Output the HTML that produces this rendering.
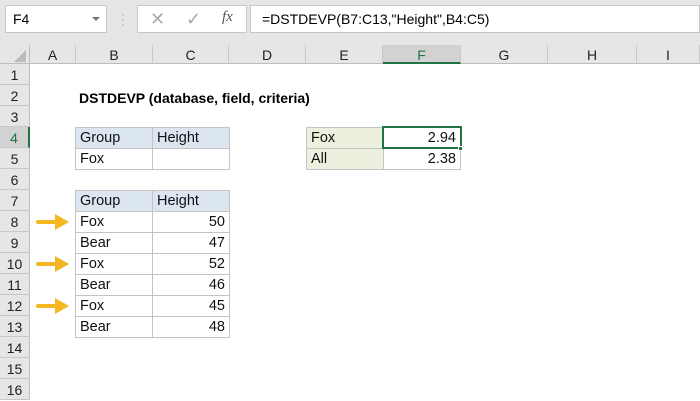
<!DOCTYPE html>
<html><head><style>
*{margin:0;padding:0;box-sizing:border-box}
body{width:700px;height:400px;overflow:hidden;background:#fff;font-family:"Liberation Sans",Calibri,sans-serif;position:relative}
.a{position:absolute}
.rh{position:absolute;left:0;width:30px;height:21px;background:#e6e6e6;border-bottom:1px solid #c8c8c8;border-right:1px solid #bdbdbd;font-size:14px;text-align:center;line-height:22px;color:#222}
.ch{position:absolute;top:45px;height:19px;background:#e6e6e6;border-right:1px solid #c8c8c8;font-size:14px;text-align:center;line-height:20px;color:#222;border-bottom:1px solid #bdbdbd}
.c{position:absolute;height:22px;border:1px solid #c4c4c4;font-size:14.5px;line-height:21px;padding:0 4px;color:#111}
.r{text-align:right}
.hd{background:#dce6f1}
.gr{background:#ebf1de}
</style></head><body>
<div class="a" style="left:0;top:0;width:700px;height:45px;background:#e6e6e6"></div>
<div class="a" style="left:5px;top:5px;width:102px;height:28px;background:#fff;border:1px solid #c6c6c6;font-size:14px;line-height:26px;padding-left:7px">F4</div>
<div class="a" style="left:92px;top:17px;width:0;height:0;border-left:4px solid transparent;border-right:4px solid transparent;border-top:4px solid #777"></div>
<div class="a" style="left:121px;top:12px;color:#aaa;font-size:12px;line-height:5px">·<br>·<br>·</div>
<div class="a" style="left:137px;top:5px;width:110px;height:28px;background:#fff;border:1px solid #c6c6c6"></div>
<div class="a" style="left:150px;top:9px;color:#aaa;font-size:18px">✕</div>
<div class="a" style="left:186px;top:9px;color:#aaa;font-size:18px">✓</div>
<div class="a" style="left:222px;top:9px;color:#555;font-size:15px;font-style:italic;font-family:'Liberation Serif',serif">fx</div>
<div class="a" style="left:250px;top:5px;width:450px;height:28px;background:#fff;border:1px solid #c6c6c6;font-size:14px;line-height:26px;padding-left:11px">=DSTDEVP(B7:C13,"Height",B4:C5)</div>
<div class="a" style="left:0;top:45px;width:30px;height:19px;background:#e6e6e6;border-right:1px solid #bdbdbd;border-bottom:1px solid #bdbdbd"></div>
<div class="a" style="left:14px;top:50px;width:0;height:0;border-left:12px solid transparent;border-bottom:12px solid #bbb"></div>
<div class="ch" style="left:30px;width:46px">A</div>
<div class="ch" style="left:76px;width:77px">B</div>
<div class="ch" style="left:153px;width:76px">C</div>
<div class="ch" style="left:229px;width:77px">D</div>
<div class="ch" style="left:306px;width:77px">E</div>
<div class="ch" style="left:383px;width:78px;background:#d2d2d2;color:#217346;border-bottom:2px solid #217346">F</div>
<div class="ch" style="left:461px;width:87px">G</div>
<div class="ch" style="left:548px;width:89px">H</div>
<div class="ch" style="left:637px;width:63px">I</div>
<div class="rh" style="top:64px">1</div><div class="rh" style="top:85px">2</div><div class="rh" style="top:106px">3</div>
<div class="rh" style="top:127px;background:#d2d2d2;color:#217346;border-right:2px solid #217346">4</div>
<div class="rh" style="top:148px">5</div><div class="rh" style="top:169px">6</div><div class="rh" style="top:190px">7</div>
<div class="rh" style="top:211px">8</div><div class="rh" style="top:232px">9</div><div class="rh" style="top:253px">10</div>
<div class="rh" style="top:274px">11</div><div class="rh" style="top:295px">12</div><div class="rh" style="top:316px">13</div>
<div class="rh" style="top:337px">14</div><div class="rh" style="top:358px">15</div><div class="rh" style="top:379px">16</div>
<div class="a" style="left:79px;top:90px;font-size:14px;font-weight:bold">DSTDEVP (database, field, criteria)</div>
<div class="c hd" style="left:75px;top:127px;width:78px">Group</div>
<div class="c hd" style="left:152px;top:127px;width:78px">Height</div>
<div class="c" style="left:75px;top:148px;width:78px">Fox</div>
<div class="c" style="left:152px;top:148px;width:78px"></div>
<div class="c hd" style="left:75px;top:190px;width:78px">Group</div>
<div class="c hd" style="left:152px;top:190px;width:78px">Height</div>
<div class="c" style="left:75px;top:211px;width:78px">Fox</div><div class="c r" style="left:152px;top:211px;width:78px">50</div>
<div class="c" style="left:75px;top:232px;width:78px">Bear</div><div class="c r" style="left:152px;top:232px;width:78px">47</div>
<div class="c" style="left:75px;top:253px;width:78px">Fox</div><div class="c r" style="left:152px;top:253px;width:78px">52</div>
<div class="c" style="left:75px;top:274px;width:78px">Bear</div><div class="c r" style="left:152px;top:274px;width:78px">46</div>
<div class="c" style="left:75px;top:295px;width:78px">Fox</div><div class="c r" style="left:152px;top:295px;width:78px">45</div>
<div class="c" style="left:75px;top:316px;width:78px">Bear</div><div class="c r" style="left:152px;top:316px;width:78px">48</div>
<div class="c gr" style="left:306px;top:127px;width:78px">Fox</div>
<div class="c r" style="left:383px;top:127px;width:78px">2.94</div>
<div class="c gr" style="left:306px;top:148px;width:78px">All</div>
<div class="c r" style="left:383px;top:148px;width:78px">2.38</div>
<div class="a" style="left:382px;top:126px;width:80px;height:23px;border:2px solid #217346"></div>
<div class="a" style="left:458px;top:146px;width:5px;height:5px;background:#217346;border:1px solid #fff"></div>
<svg class="a" style="left:0;top:0" width="700" height="400">
<g fill="#f4b623">
<path d="M38 220h17v-6l14 8-14 8v-6h-17a2 2 0 0 1 0-4z"/>
<path d="M38 262h17v-6l14 8-14 8v-6h-17a2 2 0 0 1 0-4z"/>
<path d="M38 304h17v-6l14 8-14 8v-6h-17a2 2 0 0 1 0-4z"/>
</g></svg>
</body></html>
